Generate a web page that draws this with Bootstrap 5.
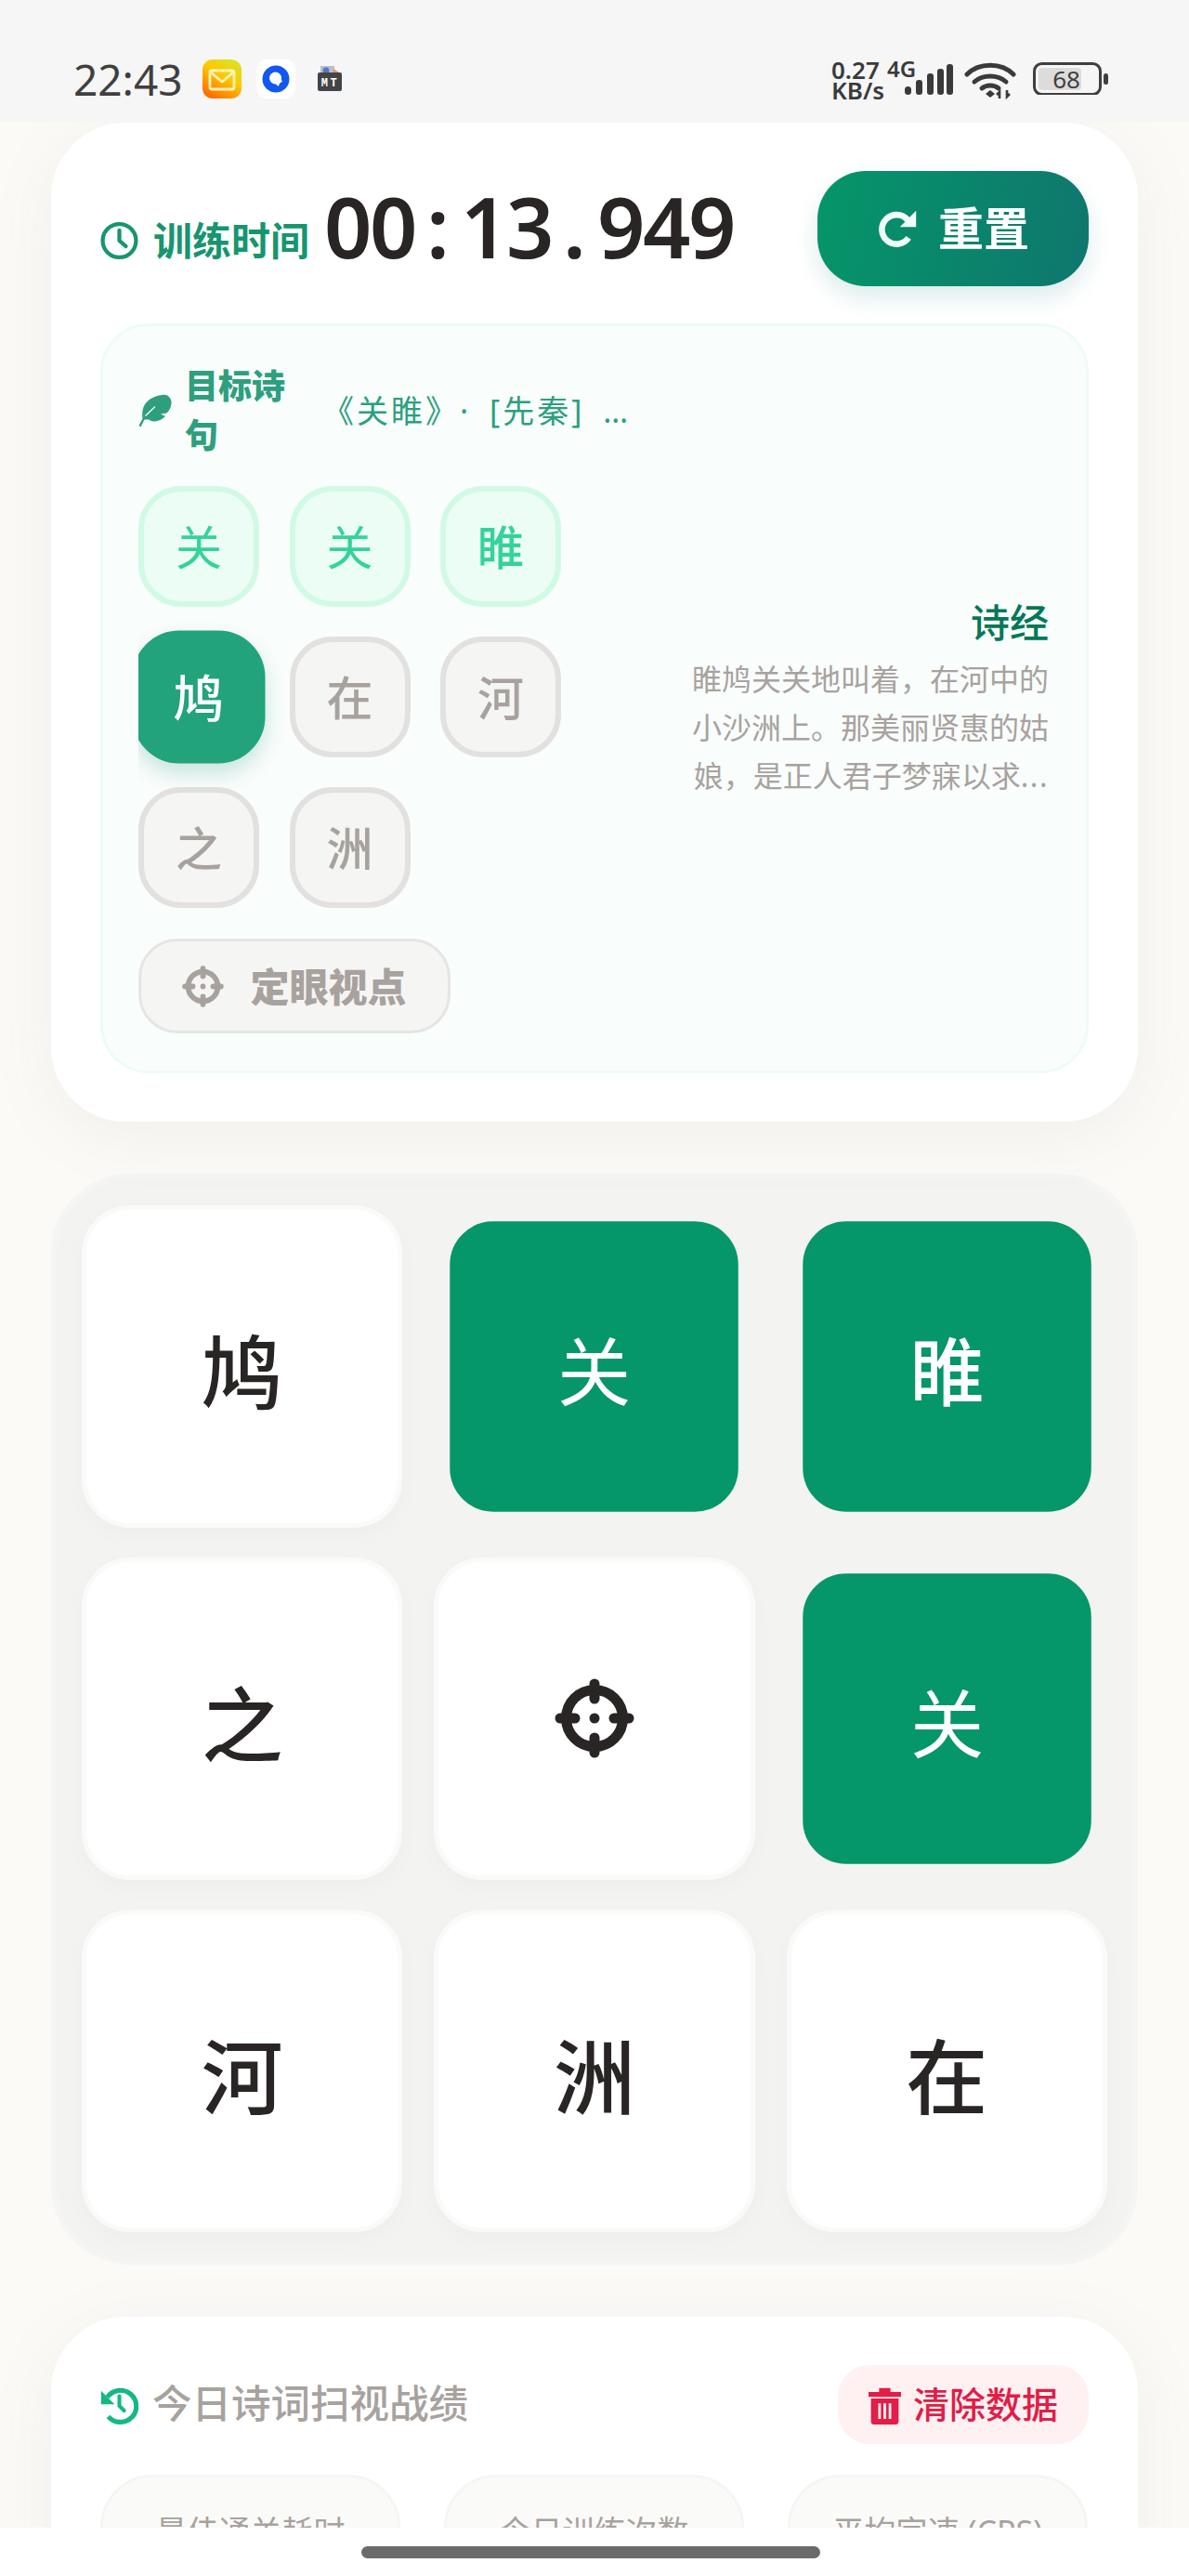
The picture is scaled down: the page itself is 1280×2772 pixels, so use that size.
<!DOCTYPE html>
<html lang="zh">

<head>
    <meta charset="UTF-8">
    <meta name="viewport" content="width=device-width, initial-scale=1.0">
    <title>诗词扫视训练</title>
    <link href="https://cdn.jsdelivr.net/npm/bootstrap@5.3.0/dist/css/bootstrap.min.css" rel="stylesheet">
    <style>
        body {
            margin: 0;
            background: #fbfaf7;
            font-family: "Noto Sans", "Noto Sans CJK SC", sans-serif;
            color: #292524;
        }

        .screen { width: 1280px; height: 2772px; }

        /* Status bar */
        .status-bar { height: 132px; background: #f6f6f6; padding: 64px 84px 0 79px; flex-shrink: 0; }
        .clock-time { font-size: 46px; line-height: 42px; color: #3f3f3f; width: 139px; }
        .app-ico { width: 42px; height: 42px; margin-right: 16px; display: block; }
        .net-speed { font-size: 26px; line-height: 22px; font-weight: 600; color: #3a3a3a; width: 60px; }
        .net-type { font-size: 24px; line-height: 20px; font-weight: 600; color: #3a3a3a; width: 17px; white-space: nowrap; }
        .wifi-ico { margin-left: 10px; }
        .batt-ico { margin-left: 18px; }

        /* Main column */
        .scroll-area { padding: 0 55px; min-height: 0; }
        .panel-card { border: 0; border-radius: 80px; background: #fff; box-shadow: 0 14px 70px rgba(120, 110, 90, .08); padding: 52px 53px; }
        .panel-card + .play-board, .play-board + .panel-card { margin-top: 56px; }

        /* Timer row */
        .timer-label { font-size: 42px; font-weight: 600; color: #17956f; width: 241px; line-height: 1; padding-top: 26px; }
        .timer-value { font-size: 90px; font-weight: 600; line-height: 1; color: #292524; width: 530px; margin-top: -6px; }
        .timer-value span { display: inline-block; width: 49px; text-align: center; }
        .btn-reset { width: 292px; height: 124px; border: 0; border-radius: 52px; color: #fff; font-size: 49px; font-weight: 600; gap: 22px; background: linear-gradient(100deg, #059669, #0f766e); box-shadow: 0 12px 24px rgba(15, 118, 110, .14); }

        /* Target verse */
        .verse-panel { margin-top: 40px; height: 807px; background: #f9fdfc; border: 3px solid #eefbf6; border-radius: 52px; padding: 38px 40px 0 38px; gap: 60px; }
        .verse-main { width: 534px; overflow: hidden; flex-shrink: 0; }
        .verse-head { height: 106px; margin-bottom: 28px; }
        .verse-title { width: 120px; margin-left: 14px; font-size: 36px; line-height: 53px; font-weight: 900; color: #2e9f7e; flex-shrink: 0; }
        .verse-source { margin-left: 28px; font-size: 34px; letter-spacing: 3px; word-spacing: 8px; text-spacing-trim: space-all; color: #2e9f7e; white-space: nowrap; overflow: hidden; text-overflow: ellipsis; }
        .verse-chars { gap: 32px 32.500px; margin-bottom: 33px; }
        .char-tile { width: 130px; height: 130px; border-radius: 46px; border: 6px solid #e2e1df; background: #f5f5f4; color: #a8a29e; font-size: 50px; font-weight: 500; padding-top: 3px; }
        .char-tile.is-done { background: #ecfdf5; border-color: #d1fae5; color: #34d399; }
        .char-tile.is-now { background: #22a37c; border-color: #22a37c; color: #fff; transform: scale(1.1); box-shadow: 0 10px 20px rgba(16, 130, 100, .2); }
        .btn-gaze { width: 336px; height: 102px; border: 3px solid #e7e5e4; border-radius: 42px; background: #f5f5f4; color: #a8a29e; font-size: 42px; font-weight: 900; gap: 28px; padding: 0; }
        .verse-side { width: 386px; flex-shrink: 0; text-align: right; margin-top: -40px; }
        .verse-book { font-size: 42px; line-height: 60px; font-weight: 500; color: #047857; margin-bottom: 5px; }
        .verse-note { font-size: 32px; line-height: 52px; color: #a8a29e; margin: 0; }
        .note-more { letter-spacing: 1.500px; }

        /* Board */
        .play-board { background: #f3f3f1; border-radius: 85px; padding: 34px 33px 35px; grid-template-columns: repeat(3, 1fr); grid-template-rows: repeat(3, 347px); gap: 32px 34px; box-shadow: inset 0 0 14px rgba(255, 255, 255, .5); }
        .board-cell { background: #fff; border: 5px solid #fafaf9; border-radius: 52px; font-size: 88px; font-weight: 500; color: #292524; padding-top: 10px; box-shadow: 0 8px 24px rgba(0, 0, 0, .025); }
        .board-cell.is-hit { background: #059669; border-color: #059669; color: #fff; transform: scale(.9); box-shadow: none; }
        .char-tile.thin-glyph, .board-cell.thin-glyph { font-weight: 400; }
        .cell-ico { margin-bottom: 12px; }

        /* Stats */
        .stats-head { height: 85px; }
        .stats-title { font-size: 42.500px; font-weight: 500; color: #a8a29e; margin: -3px 0 0 15px; }
        .btn-clear { width: 270px; height: 85px; border: 0; border-radius: 34px; background: #fff1f2; color: #e11d48; font-size: 39px; font-weight: 500; gap: 13px; }
        .stat-tile { width: 323px; background: #fafaf9; border: 3px solid #f5f5f4; border-radius: 56px; padding: 34px 0 40px; font-size: 34px; line-height: 48px; color: #a8a29e; text-align: center; }
        .stats-row { margin-top: 33px; gap: 47px; }

        /* Home indicator */
        .home-bar { height: 52px; background: #fff; flex-shrink: 0; padding: 20px 8px 0 0; }
        .home-pill { width: 494px; height: 13px; border-radius: 7px; background: #6b6b6b; }
    </style>
</head>

<body>
    <div class="screen d-flex flex-column overflow-hidden">
        <!-- Status bar -->
        <div class="status-bar d-flex align-items-start">
            <div class="clock-time">22:43</div>
            <svg class="app-ico" viewBox="0 0 42 42">
                <defs>
                    <linearGradient id="mailBg" x1="0.85" y1="0" x2="0.25" y2="1">
                        <stop offset="0" stop-color="#d6e524" />
                        <stop offset=".45" stop-color="#ffc800" />
                        <stop offset="1" stop-color="#ff6a00" />
                    </linearGradient>
                </defs>
                <rect width="42" height="42" rx="11" fill="url(#mailBg)" />
                <rect x="8" y="12" width="26" height="20" rx="2" fill="none" stroke="#fff3b8" stroke-width="2.800" />
                <path d="M9 14l12 10 12-10" fill="none" stroke="#fff3b8" stroke-width="2.800" />
            </svg>
            <svg class="app-ico" viewBox="0 0 42 42">
                <rect width="42" height="42" rx="11" fill="#fff" />
                <circle cx="21" cy="21" r="14.500" fill="#1257f0" />
                <circle cx="20.500" cy="20" r="6.500" fill="#fff" />
                <path d="M20 24c1 3 2 4 4 5 0-2 2-5 4-5l-3-6z" fill="#fff" />
            </svg>
            <svg class="app-ico" viewBox="0 0 42 42">
                <rect width="42" height="42" rx="11" fill="#f5f6f9" />
                <rect x="11" y="7" width="15" height="10" fill="#b8bec8" />
                <circle cx="17" cy="12" r="3.400" fill="#5b74c9" />
                <path d="M25 10l9 6v3h-9z" fill="#ee8a6a" />
                <rect x="8" y="14" width="26" height="20" rx="2" fill="#444" />
                <text x="21.500" y="29" text-anchor="middle" font-family="Liberation Mono" font-size="12" font-weight="700" fill="#fff" letter-spacing="2.500">MT</text>
            </svg>
            <div class="ms-auto d-flex align-items-start">
                <div class="net-speed">0.27<br>KB/s</div>
                <div class="net-type">4G</div>
                <svg width="56" height="44" viewBox="0 0 56 44">
                    <rect x="2" y="29" width="7" height="9" rx="3.500" fill="#3a3a3a" />
                    <rect x="14" y="22" width="7" height="16" rx="3" fill="#3a3a3a" />
                    <rect x="26" y="15" width="7" height="23" rx="3" fill="#3a3a3a" />
                    <rect x="37" y="10" width="7" height="28" rx="3" fill="#3a3a3a" />
                    <rect x="47" y="5" width="7" height="33" rx="3" fill="#3a3a3a" />
                </svg>
                <svg class="wifi-ico" width="56" height="44" viewBox="0 0 56 44">
                    <path d="M3 16C16 3 40 3 53 16" fill="none" stroke="#3a3a3a" stroke-width="5" stroke-linecap="round" />
                    <path d="M11 24c9-8 25-8 34 0" fill="none" stroke="#3a3a3a" stroke-width="5" stroke-linecap="round" />
                    <path d="M19 31c5-4 13-4 18 0" fill="none" stroke="#3a3a3a" stroke-width="5" stroke-linecap="round" />
                    <path d="M28 33l5 4-5 4-5-4z" fill="#3a3a3a" />
                    <path d="M38 42V35l-3 3M46 33v7l3-3" fill="none" stroke="#3a3a3a" stroke-width="2.600" />
                </svg>
                <svg class="batt-ico" width="84" height="38" viewBox="0 0 84 38">
                    <rect x="1.500" y="4.500" width="71" height="33" rx="8" fill="none" stroke="#3f3f3f" stroke-width="3" />
                    <rect x="6" y="9" width="46" height="24" rx="4" fill="#dcdcdc" />
                    <rect x="76" y="15" width="5" height="12" rx="2.500" fill="#3f3f3f" />
                    <text x="36" y="31" text-anchor="middle" font-family="Noto Sans" font-size="26" fill="#3f3f3f">68</text>
                </svg>
            </div>
        </div>

        <div class="scroll-area flex-grow-1 overflow-hidden">
            <!-- Timer + target verse -->
            <section class="card panel-card">
                <div class="d-flex align-items-center justify-content-between">
                    <div class="d-flex align-items-center">
                        <div class="timer-label d-flex align-items-center">
                            <svg width="41" height="42" viewBox="0 0 24 24" class="me-3 flex-shrink-0" fill="none" stroke="#17956f" stroke-width="2.500">
                                <circle cx="12" cy="12" r="10.500" />
                                <path d="M12 5.500V12l4 3.500" stroke-linecap="round" stroke-linejoin="round" />
                            </svg>
                            <span class="text-nowrap">训练时间</span>
                        </div>
                        <div class="timer-value text-nowrap"><span>0</span><span>0</span><span>:</span><span>1</span><span>3</span><span>.</span><span>9</span><span>4</span><span>9</span></div>
                    </div>
                    <button class="btn btn-reset d-flex align-items-center justify-content-center" type="button">
                        <svg width="44" height="46" viewBox="0 0 24 24" fill="none">
                            <path d="M18.600 17.400A8.600 8.600 0 1 1 18 6.800" stroke="#f0fdf9" stroke-width="3.600" />
                            <path d="M23 1.500V11H13.500z" fill="#f0fdf9" />
                        </svg>
                        <span>重置</span>
                    </button>
                </div>

                <div class="verse-panel d-flex align-items-center">
                    <div class="verse-main align-self-start">
                        <div class="verse-head d-flex align-items-center">
                            <svg width="36" height="36" viewBox="0 0 36 36" class="flex-shrink-0">
                                <path d="M27 .7C32 0 36 5 35.500 10 35 15 33 18 30.500 20.500L24 21.500 29 24C26 27 22 29 18 29.500 15 29.500 13 29 11.500 27.500L6.500 27.500 2.500 35.500 .5 34 4.500 26.500C3.500 21 4.500 15 7 11 11 5 19 1.500 27 .7Z" fill="#2e9f7e" />
                                <path d="M7.500 23.500L18 13.500" stroke="#f9fdfc" stroke-width="1.300" />
                            </svg>
                            <div class="verse-title">目标诗句</div>
                            <div class="verse-source">《关睢》· [先秦] 诗经·周南</div>
                        </div>
                        <div class="verse-chars d-flex flex-wrap">
                            <div class="char-tile is-done thin-glyph d-flex align-items-center justify-content-center">关</div>
                            <div class="char-tile is-done thin-glyph d-flex align-items-center justify-content-center">关</div>
                            <div class="char-tile is-done d-flex align-items-center justify-content-center">睢</div>
                            <div class="char-tile is-now d-flex align-items-center justify-content-center">鸠</div>
                            <div class="char-tile d-flex align-items-center justify-content-center">在</div>
                            <div class="char-tile d-flex align-items-center justify-content-center">河</div>
                            <div class="char-tile d-flex align-items-center justify-content-center">之</div>
                            <div class="char-tile d-flex align-items-center justify-content-center">洲</div>
                        </div>
                        <button class="btn btn-gaze d-flex align-items-center justify-content-center" type="button">
                            <svg width="45" height="45" viewBox="0 0 86 86" fill="none" stroke="#a8a29e" stroke-width="11">
                                <circle cx="43" cy="43" r="30.500" />
                                <path d="M43 6v16M43 64v16M6 43h16M64 43h16" stroke-linecap="round" />
                                <circle cx="43" cy="43" r="5.500" fill="#a8a29e" stroke="none" />
                            </svg>
                            <span>定眼视点</span>
                        </button>
                    </div>
                    <div class="verse-side">
                        <div class="verse-book">诗经</div>
                        <p class="verse-note">睢鸠关关地叫着，在河中的小沙洲上。那美丽贤惠的姑娘，是正人君子梦寐以求<span class="note-more">...</span></p>
                    </div>
                </div>
            </section>

            <!-- Board -->
            <section class="play-board d-grid">
                <div class="board-cell d-flex align-items-center justify-content-center">鸠</div>
                <div class="board-cell is-hit thin-glyph d-flex align-items-center justify-content-center">关</div>
                <div class="board-cell is-hit d-flex align-items-center justify-content-center">睢</div>
                <div class="board-cell d-flex align-items-center justify-content-center">之</div>
                <div class="board-cell d-flex align-items-center justify-content-center">
                    <svg class="cell-ico" width="86" height="86" viewBox="0 0 86 86" fill="none" stroke="#292524" stroke-width="11">
                        <circle cx="43" cy="43" r="30.500" />
                        <path d="M43 6v16M43 64v16M6 43h16M64 43h16" stroke-linecap="round" />
                        <circle cx="43" cy="43" r="5.500" fill="#292524" stroke="none" />
                    </svg>
                </div>
                <div class="board-cell is-hit thin-glyph d-flex align-items-center justify-content-center">关</div>
                <div class="board-cell d-flex align-items-center justify-content-center">河</div>
                <div class="board-cell d-flex align-items-center justify-content-center">洲</div>
                <div class="board-cell d-flex align-items-center justify-content-center">在</div>
            </section>

            <!-- Stats -->
            <section class="card panel-card">
                <div class="stats-head d-flex align-items-center justify-content-between">
                    <div class="d-flex align-items-center">
                        <svg width="41" height="42" viewBox="0 0 24 24" fill="none">
                            <path d="M4.500 7A10 10 0 1 1 5 19.200" stroke="#14b885" stroke-width="3" />
                            <path d="M.5 3V11.500H9z" fill="#14b885" />
                            <path d="M12 6.500V12.500l3 3" stroke="#14b885" stroke-width="2.400" stroke-linecap="round" />
                        </svg>
                        <div class="stats-title">今日诗词扫视战绩</div>
                    </div>
                    <button class="btn btn-clear d-flex align-items-center justify-content-center" type="button">
                        <svg width="35" height="42" viewBox="0 0 20 24">
                            <path d="M0 4h20v3H0zM6.500 1.500h7V4h-7z" fill="#e11d48" />
                            <path d="M1.500 8h17v14a2 2 0 0 1-2 2h-13a2 2 0 0 1-2-2z" fill="#e11d48" />
                            <path d="M6 11h1.600v9.500H6zM9.200 11h1.600v9.500H9.200zM12.400 11H14v9.500h-1.600z" fill="#fff1f2" />
                        </svg>
                        <span>清除数据</span>
                    </button>
                </div>
                <div class="stats-row d-flex">
                    <div class="stat-tile">最佳通关耗时</div>
                    <div class="stat-tile">今日训练次数</div>
                    <div class="stat-tile">平均字速 (CPS)</div>
                </div>
            </section>
        </div>

        <!-- Home indicator -->
        <div class="home-bar d-flex justify-content-center">
            <div class="home-pill"></div>
        </div>
    </div>

    <script src="https://cdn.jsdelivr.net/npm/bootstrap@5.3.0/dist/js/bootstrap.bundle.min.js"></script>
</body>

</html>
